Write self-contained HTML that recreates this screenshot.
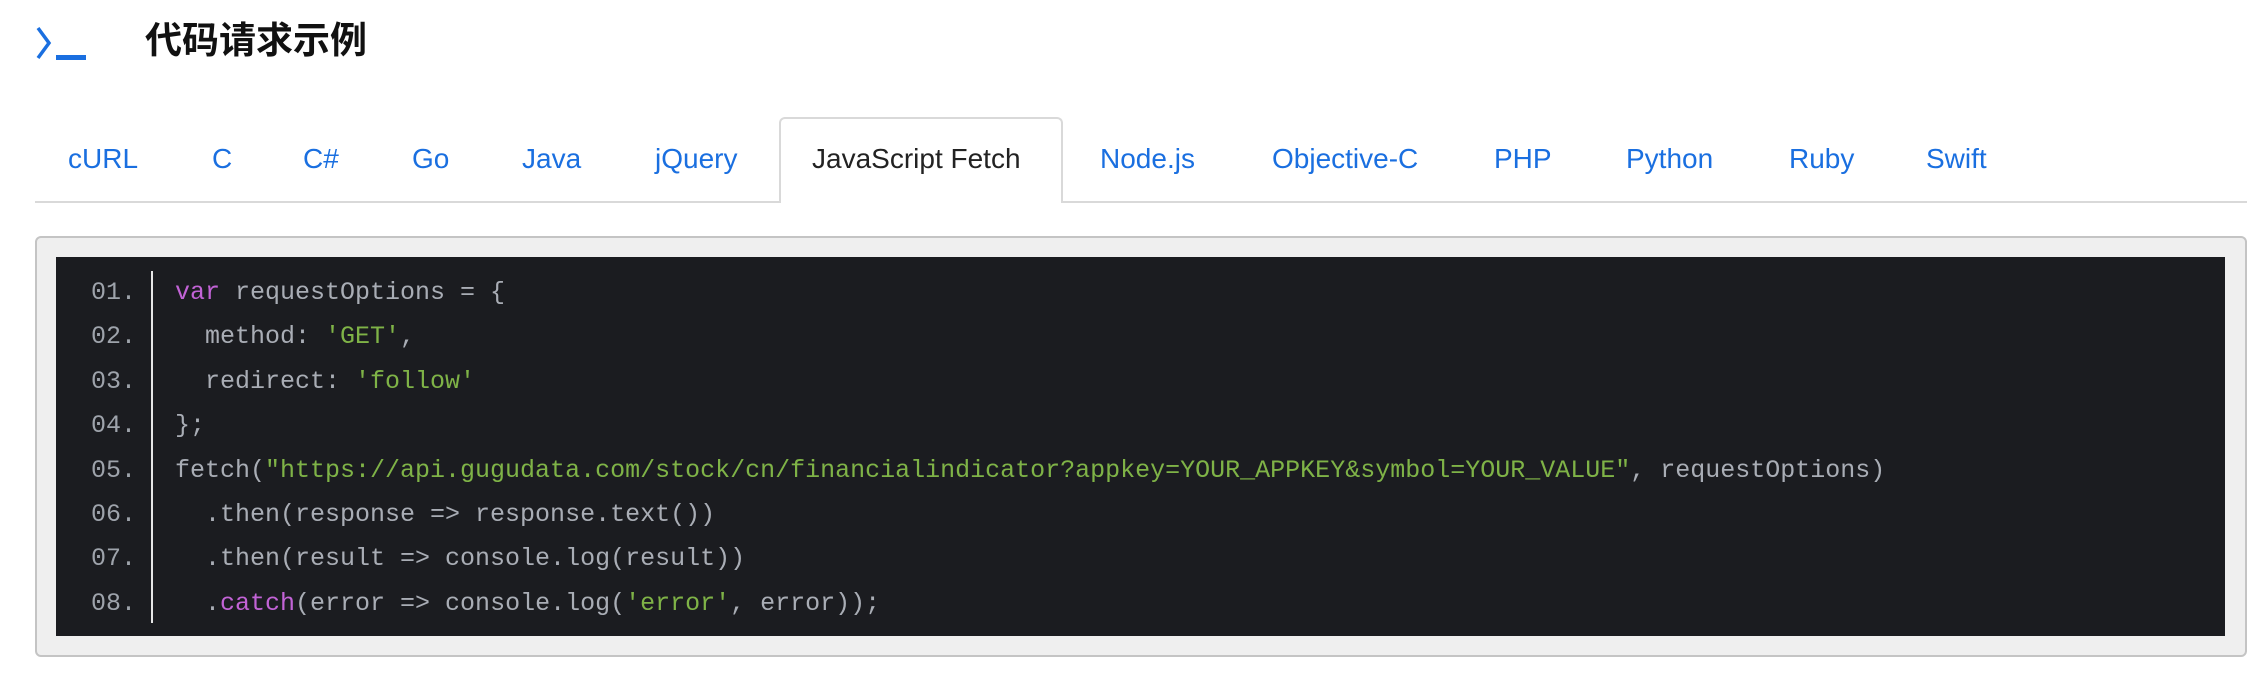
<!DOCTYPE html>
<html><head><meta charset="utf-8"><style>
body{margin:0;width:2266px;height:674px;background:#fff;position:relative;overflow:hidden;font-family:"Liberation Sans","Noto Sans CJK SC",sans-serif}
.a{position:absolute;white-space:nowrap}
.tab{position:absolute;top:139px;font-size:28px;color:#1a6fe0;line-height:40px}
.code{position:absolute;left:175px;font-family:"Liberation Mono",monospace;font-size:25px;color:#a9adb5;line-height:44px;white-space:pre}
.ln{position:absolute;left:91px;font-family:"Liberation Mono",monospace;font-size:25px;color:#9ea3ab;line-height:44px}
.k{color:#c263d6}.s{color:#7fb347}
</style></head><body>
<svg class="a" style="left:34px;top:22px" width="60" height="44" viewBox="0 0 60 44"><path d="M4 6 L15 21 L4 36" fill="none" stroke="#1a6fe0" stroke-width="3.5"/><rect x="22" y="33" width="30" height="5" fill="#1a6fe0"/></svg>
<div class="a" style="left:145px;top:10px;font-size:37px;font-weight:bold;color:#111">代码请求示例</div>
<div class="a" style="left:35px;top:201px;width:2212px;height:2px;background:#d9d9d9"></div>
<div class="a" style="left:779px;top:117px;width:284px;height:86px;background:#fff;border:2px solid #d9d9d9;border-bottom:none;border-radius:6px 6px 0 0;box-sizing:border-box"></div>
<div class="tab" style="left:68px">cURL</div>
<div class="tab" style="left:212px">C</div>
<div class="tab" style="left:303px">C#</div>
<div class="tab" style="left:412px">Go</div>
<div class="tab" style="left:522px">Java</div>
<div class="tab" style="left:655px">jQuery</div>
<div class="tab" style="left:812px;color:#222">JavaScript Fetch</div>
<div class="tab" style="left:1100px">Node.js</div>
<div class="tab" style="left:1272px">Objective-C</div>
<div class="tab" style="left:1494px">PHP</div>
<div class="tab" style="left:1626px">Python</div>
<div class="tab" style="left:1789px">Ruby</div>
<div class="tab" style="left:1926px">Swift</div>
<div class="a" style="left:35px;top:236px;width:2212px;height:421px;background:#efefef;border:2px solid #c4c4c4;border-radius:6px;box-sizing:border-box"></div>
<div class="a" style="left:56px;top:257px;width:2169px;height:379px;background:#1b1c20"></div>
<div class="a" style="left:151px;top:271px;width:2px;height:352px;background:#e6e6e6"></div>
<div class="ln" style="top:271px">01.</div><div class="ln" style="top:315px">02.</div><div class="ln" style="top:360px">03.</div><div class="ln" style="top:404px">04.</div><div class="ln" style="top:449px">05.</div><div class="ln" style="top:493px">06.</div><div class="ln" style="top:537px">07.</div><div class="ln" style="top:582px">08.</div>
<div class="code" style="top:271px"><span class="k">var</span> requestOptions = {</div>
<div class="code" style="top:315px">  method: <span class="s">'GET'</span>,</div>
<div class="code" style="top:360px">  redirect: <span class="s">'follow'</span></div>
<div class="code" style="top:404px">};</div>
<div class="code" style="top:449px">fetch(<span class="s">"https://api.gugudata.com/stock/cn/financialindicator?appkey=YOUR_APPKEY&amp;symbol=YOUR_VALUE"</span>, requestOptions)</div>
<div class="code" style="top:493px">  .then(response =&gt; response.text())</div>
<div class="code" style="top:537px">  .then(result =&gt; console.log(result))</div>
<div class="code" style="top:582px">  .<span class="k">catch</span>(error =&gt; console.log(<span class="s">'error'</span>, error));</div>
</body></html>
